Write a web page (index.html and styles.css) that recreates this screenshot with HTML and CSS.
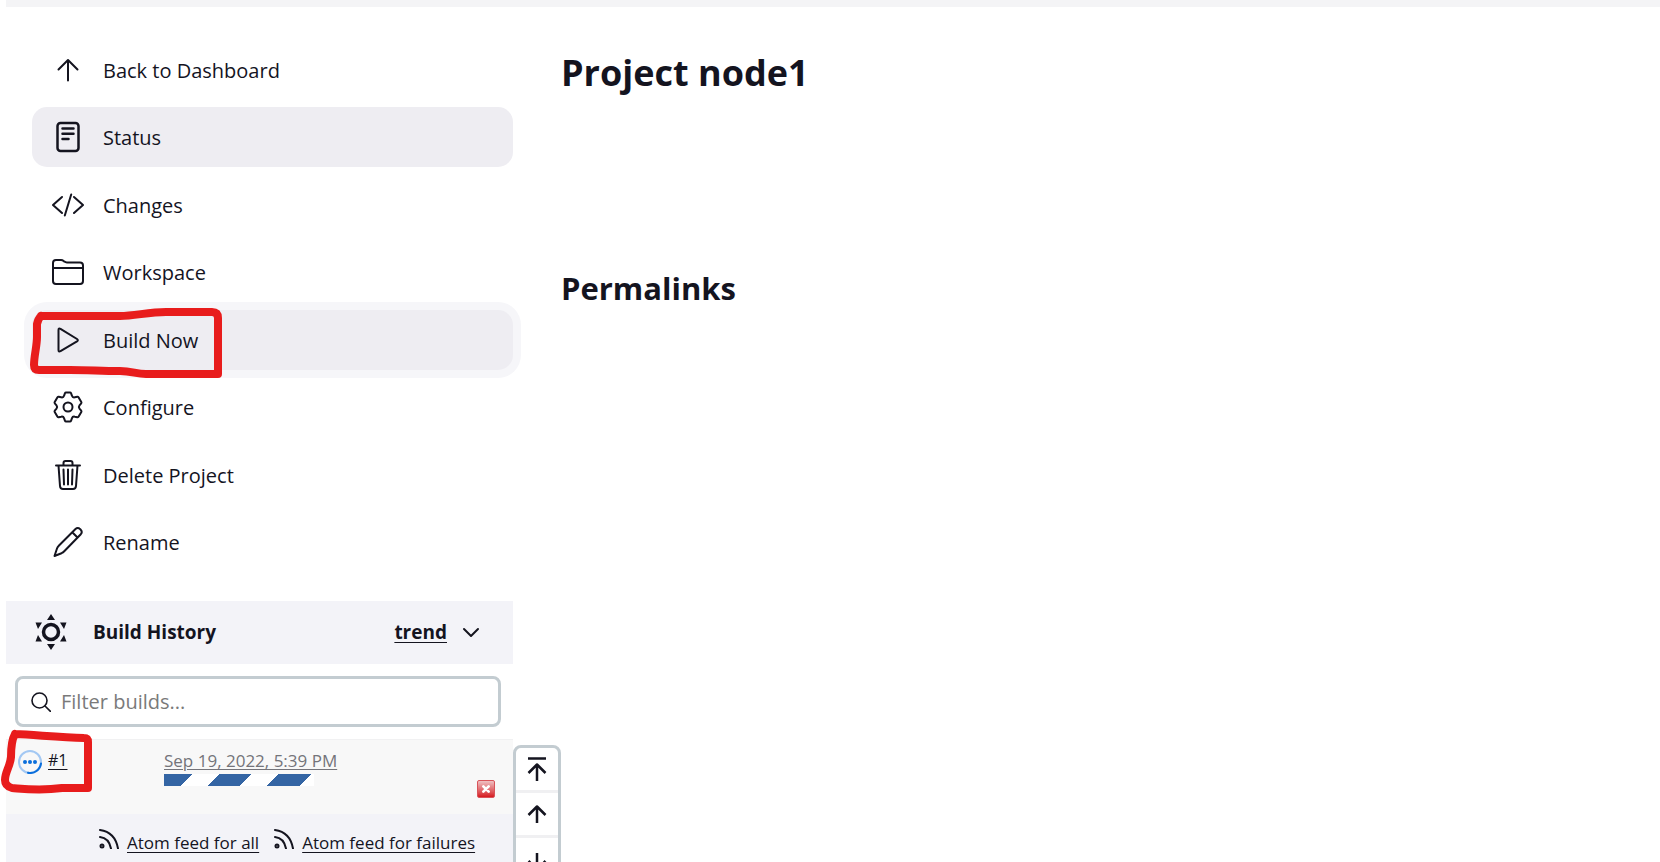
FILE: index.html
```html
<!DOCTYPE html>
<html lang="en">
<head>
<meta charset="utf-8">
<title>node1</title>
<link rel="stylesheet" href="styles.css">
</head>
<body>
<div class="page">
  <div class="crumb-bar"></div>
  <div class="columns">
    <aside class="sidebar">
      <nav class="tasks">
        <a class="task" href="#"><svg class="icon" viewBox="0 0 32 32"><path d="M6.500 15.500 16 6l9.500 9.500M16 6v20.500"/></svg><span>Back to Dashboard</span></a>
        <a class="task task-active" href="#"><svg class="icon icon-bold" viewBox="0 0 32 32"><rect x="5.500" y="2" width="21" height="28" rx="3"/><path d="M10.500 7.500h11M10.500 12.700h11M10.500 18h6"/></svg><span>Status</span></a>
        <a class="task" href="#"><svg class="icon" viewBox="0 0 32 32"><path d="M10 8 1 16l9 8M22 8l9 8-9 8M19.200 5.500 12.800 26.500"/></svg><span>Changes</span></a>
        <a class="task" href="#"><svg class="icon" viewBox="0 0 32 32"><path d="M1 25V7q0-3 3-3h5q1.500 0 2.600 1l.8.6q1 .9 2.600.9h13q3 0 3 3V25q0 3-3 3H4q-3 0-3-3zM1 12h30"/></svg><span>Workspace</span></a>
        <a class="task task-active task-focus" href="#"><svg class="icon" viewBox="0 0 32 32"><path d="M6.500 6v20q0 2.200 2 1.200l16.500-9.800q1.700-1.200 0-2.400L8.500 4.800q-2-1-2 1.200z"/></svg><span>Build Now</span></a>
        <a class="task" href="#"><svg class="icon" viewBox="0 0 32 32"><circle cx="16" cy="16" r="4.500"/><path d="M20 4.800q.6 2 2.800 1.500l2.500-.5q.8-.1 1.200.5l2.800 4.700q.4.700-.1 1.300l-1.700 2q-1.300 1.700 0 3.400l1.700 2q.5.600.1 1.300l-2.800 4.700q-.4.600-1.200.5l-2.500-.5q-2.200-.5-2.800 1.500l-1 2.600q-.3.700-1 .7h-4q-.7 0-1-.7l-1-2.600q-.6-2-2.800-1.500l-2.500.5q-.8.100-1.200-.5L2.700 21q-.4-.7.100-1.300l1.700-2q1.300-1.700 0-3.400l-1.700-2q-.5-.6-.1-1.300l2.800-4.700q.4-.6 1.200-.5l2.500.5q2.200.5 2.800-1.500l1-2.600q.3-.7 1-.7h4q.7 0 1 .7z"/></svg><span>Configure</span></a>
        <a class="task" href="#"><svg class="icon" viewBox="0 0 32 32"><path d="M4 6.500h24M6.500 6.500 8 27q.2 3 3 3h10q2.800 0 3-3l1.500-20.500M11.500 6V4q0-2 2-2h5q2 0 2 2v2M11.500 10.500l.5 15M16 10.500v15M20.500 10.500l-.5 15"/></svg><span>Delete Project</span></a>
        <a class="task" href="#"><svg class="icon" viewBox="0 0 32 32"><path d="M2.500 30 5 22.500Q5.500 21 7 19.500L23.500 3q2.200-2 4.800.2 2.600 2.600.5 5L12.500 25q-1.500 1.500-3 2.200zM20.500 6.500l5 5"/></svg><span>Rename</span></a>
      </nav>

      <section class="history">
        <header class="history-head">
          <svg class="sun" viewBox="0 0 36 36"><circle cx="18" cy="18" r="7.500"/><path d="M18 0l4 6h-8zM18 36l4-6h-8zM2.500 8.500h6.500l-4 6.500zM33.500 8.500H27l4 6.500zM2.500 27.500h6.500l-4-6.500zM33.500 27.500H27l4-6.500z"/></svg>
          <h2 class="history-title">Build History</h2>
          <a class="trend" href="#">trend</a>
          <button class="collapse" type="button" aria-label="Collapse"><svg viewBox="0 0 20 20"><path d="m3 7 7 7 7-7"/></svg></button>
        </header>
        <div class="filter">
          <svg class="search" viewBox="0 0 20 20"><circle cx="8.500" cy="8.500" r="7.500"/><path d="m14 14 5.500 5.500"/></svg>
          <input class="filter-input" type="text" placeholder="Filter builds..." aria-label="Filter builds">
        </div>
        <div class="build">
          <svg class="spinner" viewBox="0 0 24 24"><circle class="track" cx="12" cy="12" r="11"/><path class="arc" d="M23 13.500A11 11 0 0 1 10 22.800"/><g class="dots"><circle cx="7" cy="12" r="2"/><circle cx="12" cy="12" r="2"/><circle cx="17" cy="12" r="2"/></g></svg>
          <a class="build-number" href="#">#1</a>
          <div class="build-info">
            <a class="build-date" href="#">Sep 19, 2022, 5:39 PM</a>
            <div class="progress" role="progressbar" aria-label="Build progress"></div>
          </div>
          <button class="stop" type="button" aria-label="Cancel build"><svg viewBox="0 0 18 18"><path d="m6 6 6 6M12 6l-6 6"/></svg></button>
        </div>
        <footer class="feeds">
          <a class="feed" href="#"><svg viewBox="0 0 20 20"><circle cx="3" cy="17" r="1.500"/><path d="M1 8Q10 9 12 19.500M1 1q15 2 18 18.500"/></svg><span>Atom feed for all</span></a>
          <a class="feed" href="#"><svg viewBox="0 0 20 20"><circle cx="3" cy="17" r="1.500"/><path d="M1 8Q10 9 12 19.500M1 1q15 2 18 18.500"/></svg><span>Atom feed for failures</span></a>
        </footer>
        <div class="pager">
          <button type="button" aria-label="Newest builds"><svg viewBox="0 0 24 26"><path d="M3 2.500h18M12 25V8M3.500 17 12 8.500l8.500 8.500"/></svg></button>
          <button type="button" aria-label="Newer builds"><svg viewBox="0 0 24 26"><path d="M12 22V5M3.500 14 12 5.500l8.500 8.500"/></svg></button>
          <button type="button" aria-label="Older builds"><svg viewBox="0 0 24 26"><path d="M12 5v17M3.500 13l8.500 8.500 8.500-8.500"/></svg></button>
        </div>
      </section>

      <svg class="mark mark-build" viewBox="0 0 194 72"><path d="M11 8H90C105 8 118 4 136 4H182Q188 4 188 10V66H116C106 66 102 63 90 63C70 63 60 62 40 62H9Q4 62 4 57C4 48 7 38 7 29V16Q8 11 11 8"/></svg>
      <svg class="mark mark-number" viewBox="0 0 94 64"><path d="M15 5C35 6 60 8 84 9Q88 9 88 13V59H62C40 62 25 60 12 59Q5 57 5 51C5 43 10 38 11 28Q11 12 15 5"/></svg>
    </aside>
    <main class="content">
      <h1 class="project">Project node1</h1>
      <h2 class="permalinks">Permalinks</h2>
    </main>
  </div>
</div>
</body>
</html>
```
FILE: styles.css
```css
* { box-sizing: border-box; }
body {
  margin: 0;
  background: #fff;
  color: #14141f;
  font-family: "Open Sans", "Noto Sans", sans-serif;
}
a { color: inherit; }
button { border: 0; padding: 0; background: none; color: inherit; }
h1, h2 { margin: 0; }
svg {
  display: block;
  flex: none;
  fill: none;
  stroke: currentColor;
  stroke-linecap: round;
  stroke-linejoin: round;
  stroke-width: 2;
}

.page {
  display: flex;
  flex-direction: column;
  height: 100vh;
  padding-left: 6px;
  overflow: hidden;
}
.crumb-bar { flex: none; height: 7px; background: #f4f4f6; }
.columns { display: flex; flex: 1; }
.sidebar {
  position: relative;
  display: flex;
  flex-direction: column;
  flex: none;
  width: 507px;
  padding-top: 33px;
}

.tasks { padding-left: 26px; }
.task {
  display: flex;
  align-items: center;
  gap: 19px;
  height: 60px;
  margin-bottom: 7px;
  padding-left: 20px;
  border-radius: 15px;
  font-size: 20px;
  text-decoration: none;
}
.task:nth-child(even) { margin-bottom: 8px; }
.task-active { background: #eeedf2; }
.task-focus { box-shadow: 0 0 0 8px #f6f6f9; }
.icon { width: 32px; height: 32px; }
.icon-bold { stroke-width: 2.500; }

.history {
  position: relative;
  display: flex;
  flex-direction: column;
  flex: 1;
  margin-top: 21px;
}
.history-head {
  display: flex;
  align-items: center;
  height: 63px;
  padding: 0 32px 2px 27px;
  background: #f3f3f8;
}
.sun { width: 36px; height: 36px; fill: currentColor; stroke: none; }
.sun circle { fill: none; stroke: currentColor; stroke-width: 3.500; }
.history-title { margin: 0 auto 0 24px; font-size: 19px; font-weight: 700; }
.trend { margin-right: 14px; font-size: 19px; font-weight: 700; text-underline-offset: 3px; }
.collapse svg { width: 20px; height: 20px; }

.filter {
  display: flex;
  align-items: center;
  gap: 10px;
  height: 51px;
  margin: 12px 12px 12px 9px;
  padding: 0 13px;
  border: 3px solid #c3ccd1;
  border-radius: 8px;
}
.search { width: 20px; height: 20px; stroke-width: 1.600; }
.filter-input {
  flex: 1;
  min-width: 0;
  padding: 0;
  border: 0;
  outline: 0;
  background: none;
  font: inherit;
  font-size: 20px;
}
.filter-input::placeholder { color: #7a7a7a; opacity: 1; }

.build {
  display: flex;
  height: 75px;
  padding: 9px 18px 0 12px;
  border-top: 1px solid #f1f1f2;
  background: #f8f8f8;
}
.spinner { width: 24px; height: 24px; margin: 1px 6px 0 0; }
.track { stroke: #a3c8f3; }
.arc { stroke: #0b6fdc; }
.dots { fill: #0b6fdc; stroke: none; }
.build-number { width: 116px; font-size: 16px; line-height: 22px; text-underline-offset: 3px; }
.build-info { flex: 1; }
.build-date {
  display: block;
  color: #74747a;
  font-size: 17px;
  line-height: 24px;
  text-underline-offset: 2px;
}
.progress {
  width: 150px;
  height: 12px;
  margin-top: 1px;
  background: repeating-linear-gradient(135deg, #3465a4 0 20px, #fff 20px 39px, #3465a4 39px 42px);
}
.stop {
  align-self: flex-start;
  width: 18px;
  height: 18px;
  margin-top: 31px;
  border: 1px solid #d9545a;
  border-radius: 2px;
  background: linear-gradient(#efc0c2, #dd4a4e 75%, #d61a1f);
}
.stop svg { width: 16px; height: 16px; stroke: #fff; stroke-width: 3; }

.feeds {
  display: flex;
  align-items: flex-start;
  gap: 15px;
  flex: 1;
  padding: 15px 0 0 93px;
  background: #f3f3f8;
}
.feed { display: flex; gap: 8px; font-size: 17px; line-height: 28px; text-underline-offset: 3px; }
.feed svg { width: 20px; height: 20px; }

.pager {
  position: absolute;
  top: 144px;
  left: 100%;
  width: 48px;
  border: 3px solid #c3ccd1;
  border-radius: 8px;
  background: #fff;
}
.pager button { display: flex; align-items: center; justify-content: center; width: 100%; height: 45px; border-bottom: 3px solid #f0f0f2; }
.pager button:last-child { border-bottom: 0; }
.pager svg { width: 24px; height: 26px; stroke-width: 2.500; stroke-linecap: butt; }

.mark { position: absolute; overflow: visible; stroke: #e81c1c; stroke-width: 8; pointer-events: none; }
.mark-build { top: 301px; left: 24px; width: 194px; height: 72px; }
.mark-number { top: 722px; left: -6px; width: 94px; height: 64px; }

.content { flex: 1; padding: 40px 48px; }
.project { font-size: 36px; line-height: 52px; font-weight: 700; }
.permalinks { margin-top: 167px; font-size: 31px; line-height: 44px; font-weight: 700; }
```
